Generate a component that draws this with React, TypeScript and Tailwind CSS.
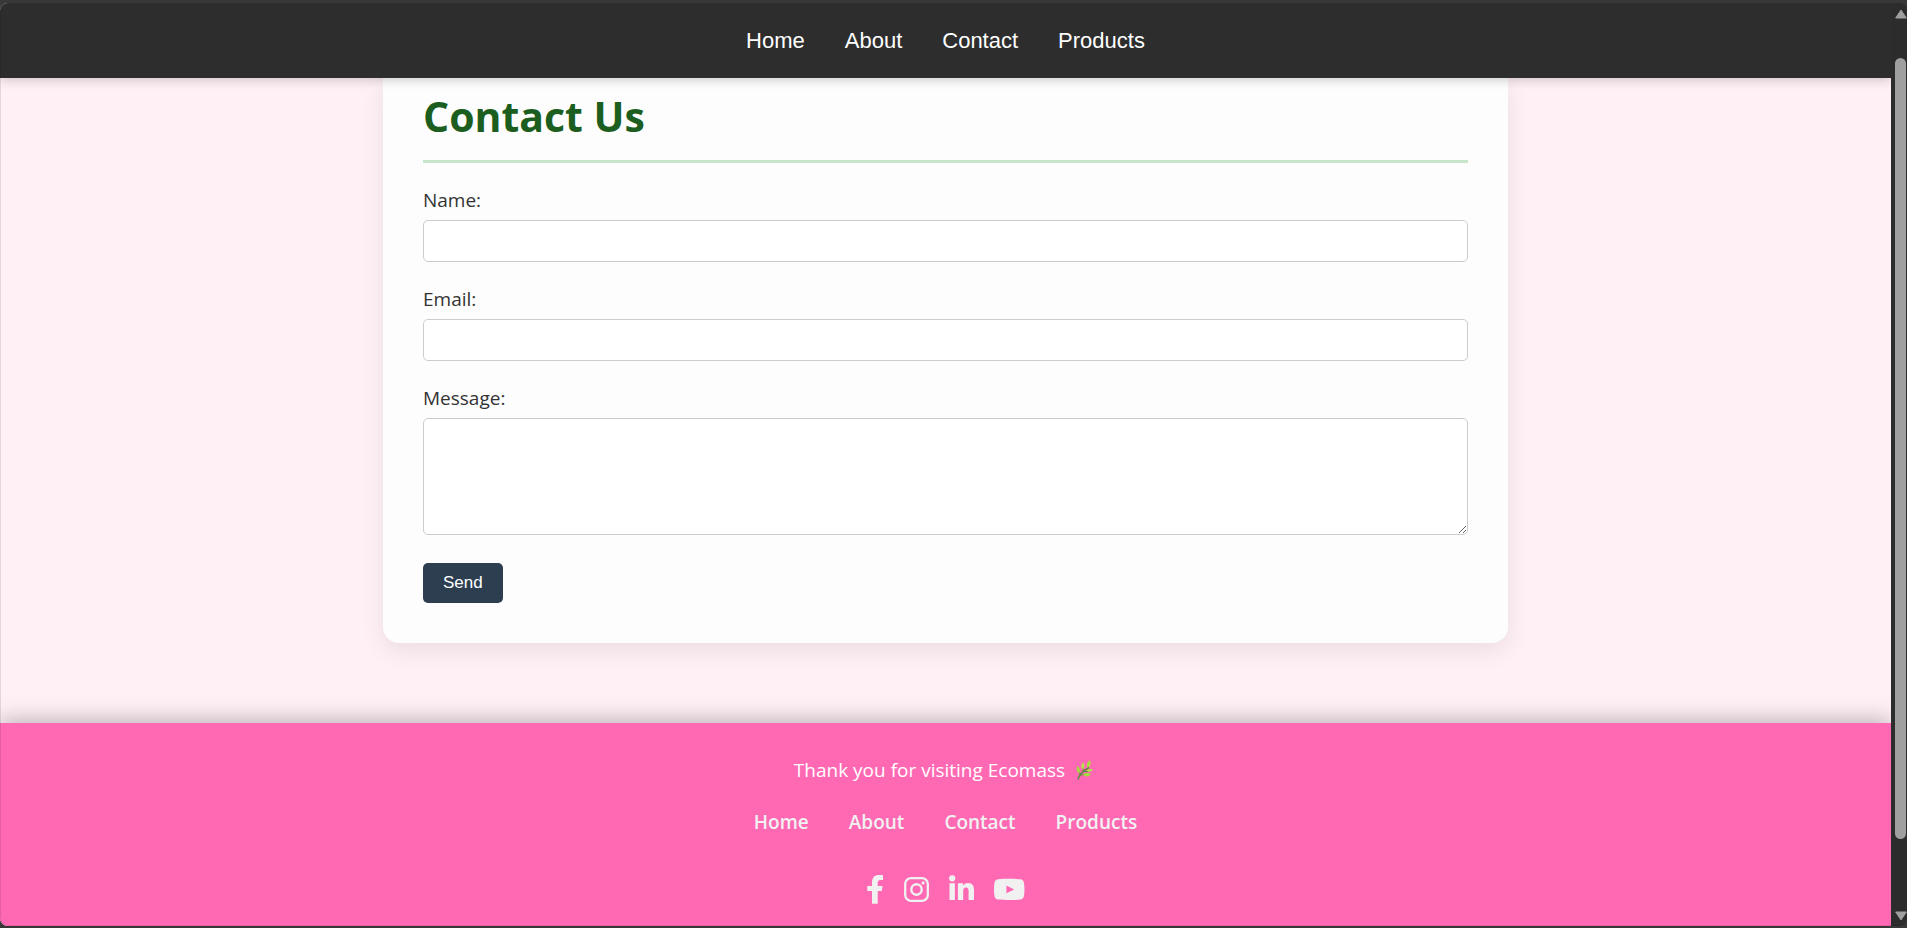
import type { ReactNode } from "react";

const links = ["Home", "About", "Contact", "Products"];

function Facebook() {
  return (
    <svg viewBox="0 0 18 29" className="h-[29px] w-[18px]" fill="currentColor" aria-hidden="true">
      <path d="M6 28.800V16H1.300V11H6V7.200C6 2.600 8.700 0 13 0c1.600 0 3 .1 4 .300V4.900h-2.600c-2 0-2.700 1-2.700 2.700V11h4.900l-.8 5h-4.100v12.800z" />
    </svg>
  );
}

function Instagram() {
  return (
    <svg viewBox="0 0 25 29" className="h-[29px] w-[25px]" fill="none" stroke="currentColor" aria-hidden="true">
      <rect x="1.200" y="3.200" width="22.600" height="22.600" rx="5.800" strokeWidth="2.300" />
      <circle cx="12.500" cy="14.500" r="5.200" strokeWidth="2.400" />
      <circle cx="19.100" cy="7.900" r="1.600" fill="currentColor" stroke="none" />
    </svg>
  );
}

function LinkedIn() {
  return (
    <svg viewBox="0 0 25 29" className="h-[29px] w-[25px]" fill="currentColor" aria-hidden="true">
      <circle cx="3.200" cy="3.300" r="3.100" />
      <path d="M.5 8.300h5.400V25H.5zM8.900 25V8.300h5.200v2.300c.8-1.500 2.500-2.700 5-2.700 4.500 0 5.900 3 5.900 7.300V25h-5.400v-8.400c0-2.200-.3-4-2.600-4s-2.800 1.800-2.800 3.900V25z" />
    </svg>
  );
}

function YouTube() {
  return (
    <svg viewBox="0 0 32 29" className="h-[29px] w-[32px]" fill="currentColor" aria-hidden="true">
      <path
        fillRule="evenodd"
        d="M4.200 4.300C7 3.900 11 3.800 15.200 3.800s8.200.1 11 .5c2 .2 3.400 1.400 3.700 3.400.4 2.300.6 4.300.6 6.700s-.2 4.500-.6 6.800c-.3 2-1.700 3.200-3.700 3.400-2.800.3-6.800.4-11 .4s-8.200-.1-11-.4c-2-.2-3.400-1.400-3.700-3.400-.4-2.300-.5-4.400-.5-6.800s.1-4.400.5-6.700c.3-2 1.700-3.200 3.700-3.400zM12.400 10.600v7.600l7.800-3.800z"
      />
    </svg>
  );
}

const socials = [
  { label: "Facebook", Icon: Facebook },
  { label: "Instagram", Icon: Instagram },
  { label: "LinkedIn", Icon: LinkedIn },
  { label: "YouTube", Icon: YouTube },
];

function Herb() {
  return (
    <svg viewBox="0 0 20 20" className="h-5 w-6" role="img" aria-label="herb">
      <path d="M3 19.5C4 14.5 8 11 14 7.500" fill="none" stroke="#5c8a3c" strokeWidth="1.500" />
      <path d="M5 14.500 3.600 12M8 11.500V8M5.500 15l4-.5M9 11.500l4 0" fill="none" stroke="#5c8a3c" strokeWidth="1" />
      <path d="M4.300 13.500C1.500 11.500 1 8.500 2.300 6 5 8 5.800 10.500 4.300 13.500Z" fill="#a4dc3c" />
      <path d="M7.700 9.500C5.600 7 6 4.500 8.200 2.500 9.900 5 9.700 7.500 7.700 9.500Z" fill="#b2e34a" />
      <path d="M12.500 7.800C11 5 12 2 15 .2 16.300 3 15.500 6 12.500 7.800Z" fill="#a4dc3c" />
      <path d="M11.500 10.800C13 8.800 15.500 8.500 18 9.300 16.600 12 14 12.500 11.500 10.800Z" fill="#b2e34a" />
      <path d="M8 15C10 12.700 13 12.600 15.800 14.200 13.500 17 10.500 17 8 15Z" fill="#a4dc3c" />
    </svg>
  );
}

function Field({ id, label, children }: { id: string; label: string; children: ReactNode }) {
  return (
    <div className="flex flex-col gap-1">
      <label htmlFor={id} className="text-[19px] leading-8 text-[#333]">
        {label}
      </label>
      {children}
    </div>
  );
}

function Scrollbar() {
  return (
    <div aria-hidden="true" className="flex w-4 shrink-0 flex-col items-center justify-between bg-[#2c2c2c] py-1 pl-1">
      <svg viewBox="0 0 12 12" className="size-3">
        <path d="M6 3 11.300 11H.7Z" fill="#9f9f9f" stroke="#9f9f9f" strokeLinejoin="round" />
      </svg>
      <div className="flex w-full flex-1 flex-col pt-[39px] pb-[71px]">
        <div className="mr-px flex-1 rounded-full bg-[#9f9f9f]" />
      </div>
      <svg viewBox="0 0 12 12" className="size-3">
        <path d="M6 10 11.300 2H.7Z" fill="#9f9f9f" stroke="#9f9f9f" strokeLinejoin="round" />
      </svg>
    </div>
  );
}

export default function App() {
  return (
    <div className="h-screen overflow-hidden bg-[#383838] pt-[3px] pb-[2px] font-['Open_Sans','Noto_Sans',sans-serif]">
      <div className="relative flex h-full overflow-hidden rounded-lg">
        <div className="flex min-w-0 flex-1 flex-col overflow-hidden bg-[#fff0f5]">
          <header className="relative z-10 bg-[#2d2d2d] shadow-[0_2px_10px_rgba(0,0,0,0.2)]">
            <nav className="flex h-[75px] items-center justify-center gap-10 font-['Liberation_Sans',Arial,sans-serif] text-[22px] text-white">
              {links.map((link) => (
                <a key={link} href="#">
                  {link}
                </a>
              ))}
            </nav>
          </header>

          <main className="px-10 pb-20">
            <section className="mx-auto max-w-[1125px] rounded-b-2xl bg-[#fdfdfd] px-10 pt-2 pb-10 shadow-[0_8px_24px_rgba(0,0,0,0.08)]">
              <h1 className="border-b-[3px] border-[#c8e6c9] pb-[14px] text-[41px] leading-[60px] font-bold text-[#1b5e20]">
                Contact Us
              </h1>
              <form className="flex flex-col gap-[21px] pt-[21px]">
                <Field id="name" label="Name:">
                  <input id="name" type="text" className="h-[42px] rounded-[5px] border border-[#ccc] bg-white px-3" />
                </Field>
                <Field id="email" label="Email:">
                  <input id="email" type="email" className="h-[42px] rounded-[5px] border border-[#ccc] bg-white px-3" />
                </Field>
                <Field id="message" label="Message:">
                  <textarea id="message" className="h-[117px] resize-y rounded-[5px] border border-[#ccc] bg-white p-3" />
                </Field>
                <button
                  type="button"
                  className="mt-[7px] h-10 self-start rounded-[5px] bg-[#2c3e50] px-5 font-['Liberation_Sans',Arial,sans-serif] text-[17px] text-white"
                >
                  Send
                </button>
              </form>
            </section>
          </main>

          <footer className="flex flex-1 flex-col items-center bg-[#ff69b4] pt-[31px] shadow-[0_-4px_20px_rgba(0,0,0,0.25)]">
            <p className="flex items-center gap-2 text-[19px] leading-8 text-white">
              Thank you for visiting Ecomass <Herb />
            </p>
            <nav className="mt-5 flex gap-10 text-[19px] leading-8 font-semibold text-[#f1f1f1]">
              {links.map((link) => (
                <a key={link} href="#">
                  {link}
                </a>
              ))}
            </nav>
            <div className="mt-[37px] flex gap-5 text-[#f1f1f1]">
              {socials.map(({ label, Icon }) => (
                <a key={label} href="#" aria-label={label}>
                  <Icon />
                </a>
              ))}
            </div>
          </footer>
        </div>
        <Scrollbar />
        <div className="pointer-events-none absolute inset-0 z-20 rounded-lg border-b border-l border-black/10" />
      </div>
    </div>
  );
}
